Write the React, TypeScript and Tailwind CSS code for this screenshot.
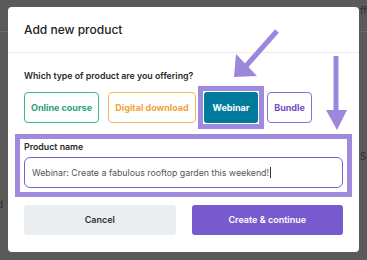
import React from "react";

const font = { fontFamily: "Inter, 'Noto Sans', sans-serif" };

function Arrows() {
  return (
    <svg
      className="absolute left-0 top-0 pointer-events-none"
      width="367"
      height="260"
      viewBox="0 0 367 260"
    >
      {/* diagonal arrow pointing to Webinar */}
      <line x1="277" y1="31" x2="246" y2="66" stroke="#9d87dc" strokeWidth="5" />
      <polygon points="236,54 234,77 257,76" fill="#9d87dc" />
      {/* vertical arrow pointing to product name */}
      <line x1="336" y1="56" x2="336" y2="112" stroke="#9d87dc" strokeWidth="5" />
      <polygon points="326,110 347,110 337,130" fill="#9d87dc" />
    </svg>
  );
}

export default function App() {
  const typeBtn =
    "h-[31px] rounded-[4px] border-[1.5px] bg-white text-[9px] font-bold flex items-center justify-center whitespace-nowrap";

  return (
    <div
      className="relative w-[367px] h-[260px] overflow-hidden bg-[#5a5a5a]"
      style={font}
    >
      {/* dimmed page behind the dialog */}
      <div className="absolute left-0 top-[31px] w-full h-px bg-[#6b6b6b]" />
      <span className="absolute left-[360px] top-[3px] text-[10px] text-[#2f2f2f]">ffi</span>
      <span className="absolute left-[360px] top-[149px] text-[10px] text-[#2f2f2f]">Sl</span>
      <span className="absolute left-[-3px] top-[197px] text-[10px] text-[#2f2f2f]">d</span>

      {/* Dialog */}
      <div className="relative ml-[8px] mt-[7px] w-[351px] h-[245px] bg-white rounded-[4px]">
        <div className="h-[46px] px-4 flex items-center border-b border-[#ececec]">
          <h2 className="text-[12px] font-medium text-[#222]">Add new product</h2>
        </div>
        <div className="px-4 pt-4 pb-4">
          <p className="text-[8.8px] leading-[14px] font-semibold text-[#2a2a2a]">
            Which type of product are you offering?
          </p>
          <div className="mt-[9px] flex gap-[8px]">
            <button className={`${typeBtn} w-[75px] border-[#37b985] text-[#27a36f]`}>
              Online course
            </button>
            <button className={`${typeBtn} w-[88px] border-[#f3bb62] text-[#f0a437] ml-[1px]`}>
              Digital download
            </button>
            <div className="-mx-[6px] -my-[6px] border-[5px] border-[#a08ade] p-[1px]">
              <button className="h-[31px] w-[54px] rounded-[3px] bg-[#017b9c] text-white text-[9px] font-bold flex items-center justify-center">
                Webinar
              </button>
            </div>
            <button className={`${typeBtn} w-[45px] border-[#8d6cd8] text-[#6f4cc6] ml-[1px]`}>
              Bundle
            </button>
          </div>

          <div className="mt-[11px] -mx-[9px] border-[5px] border-[#a08ade] px-[4px] pt-[1px] pb-[4px]">
            <label className="block text-[8.8px] leading-[14px] font-semibold text-[#2a2a2a]">
              Product name
            </label>
            <div className="mt-[3px] h-[31px] rounded-[6px] border border-[#7b5fd0] px-[7px] flex items-center text-[8.8px] text-[#555]">
              <span>Webinar: Create a fabulous rooftop garden this weekend!</span>
              <span className="ml-[1px] w-px h-[11px] bg-[#333]" />
            </div>
          </div>

          <div className="mt-[8px] grid grid-cols-2 gap-4">
            <button className="h-[30px] rounded-[3px] bg-[#ebeef1] text-[9px] font-semibold text-[#333]">
              Cancel
            </button>
            <button className="h-[30px] rounded-[3px] bg-[#775acd] text-[9px] font-semibold text-white">
              Create &amp; continue
            </button>
          </div>
        </div>
      </div>

      <Arrows />
    </div>
  );
}
